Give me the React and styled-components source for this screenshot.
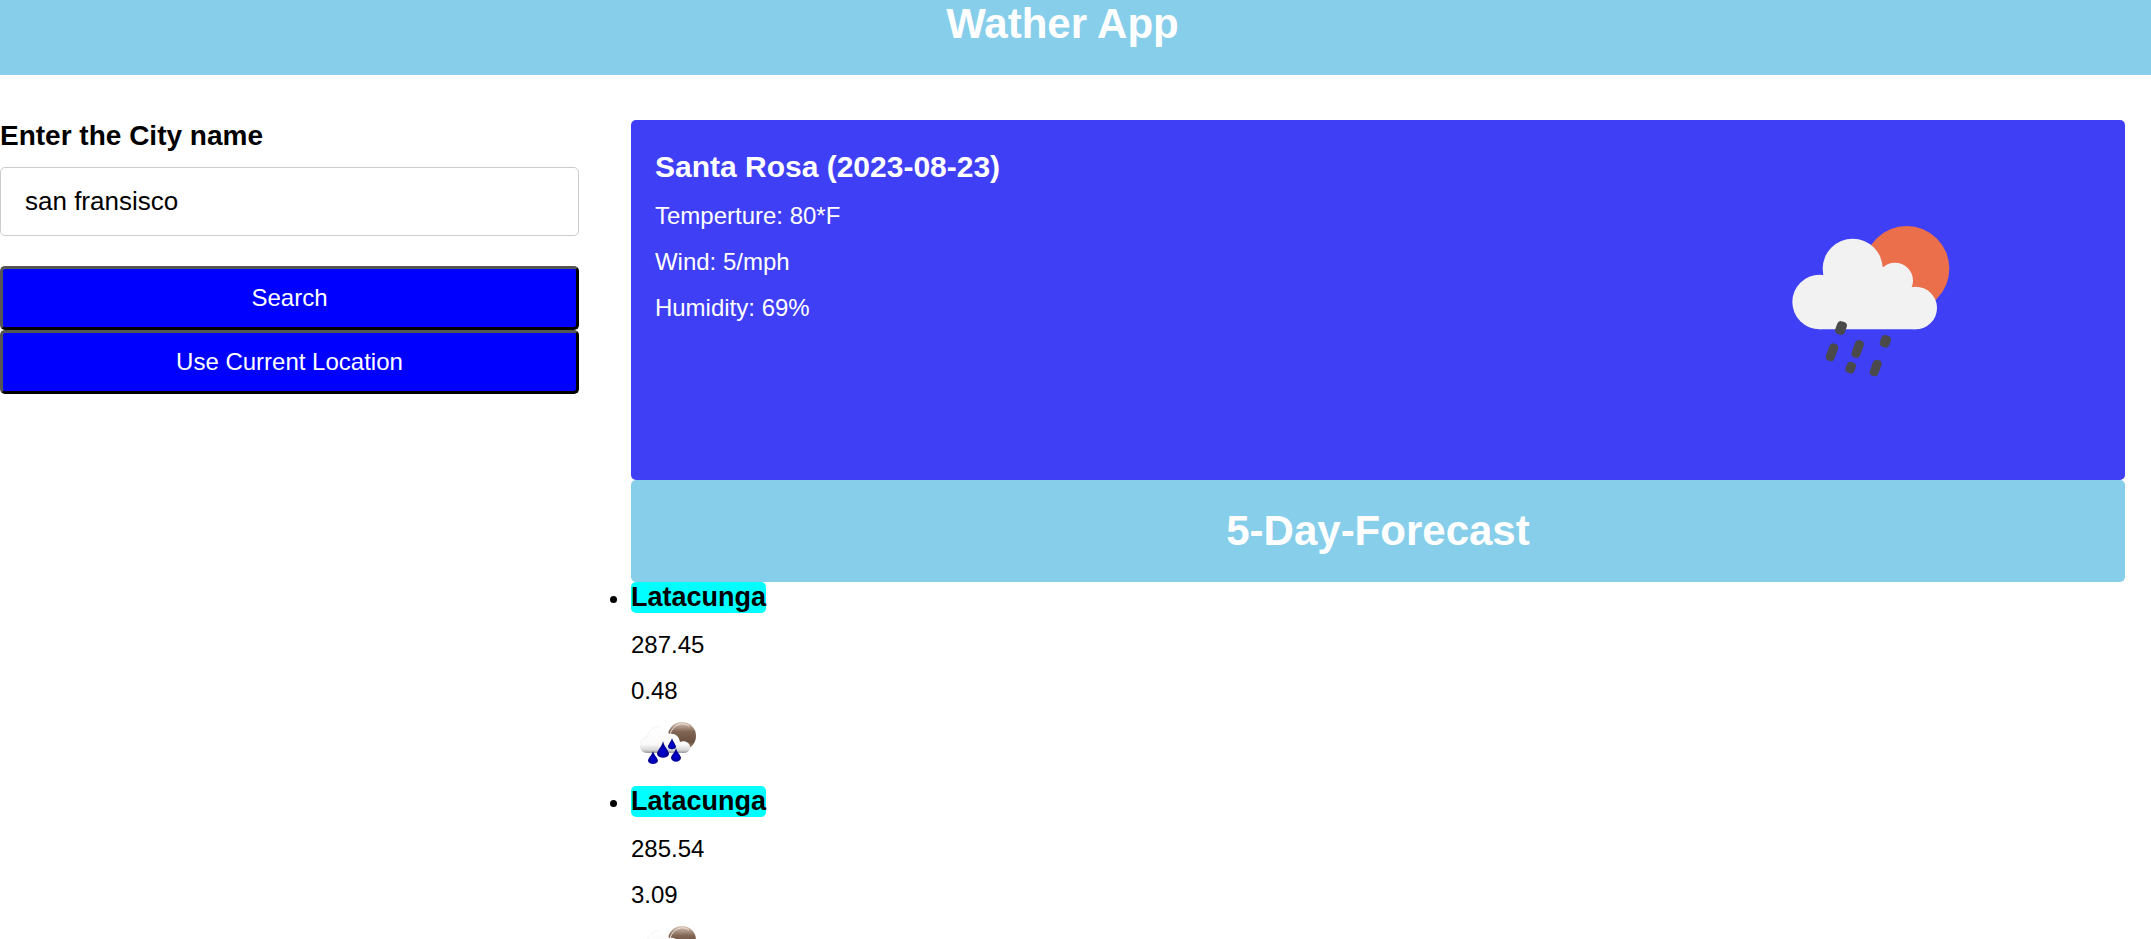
import React, { useState } from "react";
import styled, { createGlobalStyle } from "styled-components";

const GlobalStyle = createGlobalStyle`
  *, *::before, *::after { box-sizing: border-box; }
  body {
    margin: 0;
    background: #fff;
    color: #000;
    font-family: "Liberation Sans", Arial, sans-serif;
    font-size: 24px;
    line-height: 28px;
  }
`;

const Page = styled.div`
  height: 100vh;
  overflow: hidden;
`;

const Header = styled.header`
  padding: 0 26px 27px 0;
  background: skyblue;
  color: #fff;
  text-align: center;
`;

const Title = styled.h1`
  margin: 0;
  font-size: 42px;
  line-height: 48px;
`;

const Layout = styled.main`
  display: grid;
  grid-template-columns: minmax(0, 31fr) minmax(0, 80fr);
  column-gap: 52px;
  align-items: start;
  padding: 45px 26px 0 0;
`;

const SearchForm = styled.form`
  display: flex;
  flex-direction: column;
`;

const CityLabel = styled.label`
  margin-bottom: 15px;
  font-size: 28px;
  font-weight: bold;
  line-height: 32px;
`;

const CityInput = styled.input`
  width: 100%;
  height: 69px;
  margin-bottom: 30px;
  padding: 0 24px;
  border: 1px solid #ccc;
  border-radius: 5px;
  background: #fff;
  color: #000;
  font-family: inherit;
  font-size: 26px;
`;

const Button = styled.button`
  width: 100%;
  height: 64px;
  padding: 0;
  border: 3px solid;
  border-color: #555 #000 #000 #555;
  border-radius: 5px;
  background: #00f;
  color: #fff;
  font-family: inherit;
  font-size: 24px;
  cursor: pointer;
`;

const CurrentWeather = styled.article`
  display: flex;
  justify-content: space-between;
  min-height: 360px;
  padding: 30px 24px;
  border-radius: 5px;
  background: #3f3ff5;
  color: #fff;
`;

const Details = styled.div`
  display: flex;
  flex-direction: column;
  gap: 18px;
`;

const City = styled.h2`
  margin: 0;
  font-size: 30px;
  line-height: 34px;
`;

const Reading = styled.p`
  margin: 0;
`;

const Figure = styled.div`
  display: flex;
  flex: 0 0 32%;
  align-items: center;
  justify-content: center;
`;

const ForecastBanner = styled.div`
  padding: 27px;
  border-radius: 5px;
  background: skyblue;
  color: #fff;
  text-align: center;
`;

const ForecastTitle = styled(Title).attrs({ as: "h2" })``;

const ForecastList = styled.ul`
  margin: 0;
  padding: 0;
`;

const Day = styled.li`
  & > p { margin-top: 18px; }
`;

const DayCity = styled.h3`
  display: inline-block;
  margin: 0;
  border-radius: 5px;
  background: aqua;
  font-size: 27px;
  line-height: 31px;
`;

const DayIcon = styled.svg`
  display: block;
`;

const drops = [
  { x: 243, y: 384, width: 30, height: 40 },
  { x: 216, y: 457, width: 27, height: 54 },
  { x: 293, y: 447, width: 27, height: 54 },
  { x: 376, y: 424, width: 30, height: 36 },
  { x: 272, y: 503, width: 28, height: 34 },
  { x: 347, y: 504, width: 27, height: 50 },
];

function RainIcon() {
  return (
    <svg width="220" height="200" viewBox="0 0 660 600" role="img" aria-label="Rain">
      <circle cx="440" cy="206" r="128" fill="#eb6f4b" />
      <g fill="#f2f2f2">
        <circle cx="278" cy="206" r="90" />
        <circle cx="179" cy="306" r="82" />
        <circle cx="405" cy="242" r="54" />
        <circle cx="467" cy="324" r="64" />
        <path d="M179 225H240L368 200L430 265L467 262V388H179Z" />
      </g>
      <g fill="#4a4a4a">
        {drops.map(({ x, y, width, height }) => (
          <rect
            key={x}
            x={x - width / 2}
            y={y - height / 2}
            width={width}
            height={height}
            rx="12"
            transform={`rotate(20 ${x} ${y})`}
          />
        ))}
      </g>
    </svg>
  );
}

function ShowerIcon({ id }) {
  return (
    <DayIcon width="66" height="81" viewBox="0 0 66 81" role="img" aria-label="Showers">
      <defs>
        <linearGradient id={`${id}-sun`} x1="0" y1="0" x2="0" y2="1">
          <stop offset="0" stopColor="#dcc8ba" />
          <stop offset="0.35" stopColor="#806454" />
          <stop offset="0.7" stopColor="#6b5141" />
          <stop offset="1" stopColor="#a98e7d" />
        </linearGradient>
        <linearGradient id={`${id}-cloud`} gradientUnits="userSpaceOnUse" x1="0" y1="21" x2="0" y2="49">
          <stop offset="0" stopColor="#fff" />
          <stop offset="0.65" stopColor="#fafafa" />
          <stop offset="0.85" stopColor="#d8d8d8" />
          <stop offset="1" stopColor="#858585" />
        </linearGradient>
        <radialGradient id={`${id}-drop`} cx="0.5" cy="0.65" r="0.55">
          <stop offset="0" stopColor="#0000e0" />
          <stop offset="1" stopColor="#000078" />
        </radialGradient>
      </defs>
      <circle cx="51" cy="31" r="14" fill={`url(#${id}-sun)`} />
      <path d="M39 29C42 20 51 16 58 21" fill="none" stroke="#f0e4da" strokeWidth="1" />
      <path
        d="M16 48C11 48 9 44 9 41C9 36 12 33 16 32C17 26 22 22 28 22C33 22 36 25 38 29C44 28 48 31 49 37C54 35 59 38 59 42C59 46 56 48 52 48Z"
        fill={`url(#${id}-cloud)`}
      />
      <path d="M9 39C9 35 12 33 16 32C17 26 22 22 28 22" fill="none" stroke="#f4f4f4" strokeWidth="1" />
      <g fill={`url(#${id}-drop)`}>
        <path d="M32 36C31 42 26 45 26 49C27 54 37 54 38 49C38 45 33 42 32 36Z" />
        <path d="M41 33C40 37 37 39 37 42C38 45 44 45 45 42C45 39 42 37 41 33Z" />
        <path d="M22 46C21 50 17 53 17 56C18 60 26 60 27 56C27 53 23 50 22 46Z" />
        <path d="M45 43C44 48 40 50 40 53C41 58 49 58 50 53C50 50 46 48 45 43Z" />
      </g>
    </DayIcon>
  );
}

const forecast = [
  { id: "day-1", city: "Latacunga", temperature: "287.45", wind: "0.48" },
  { id: "day-2", city: "Latacunga", temperature: "285.54", wind: "3.09" },
];

export default function App() {
  const [city, setCity] = useState("san fransisco");

  return (
    <>
      <GlobalStyle />
      <Page>
        <Header>
          <Title>Wather App</Title>
        </Header>
        <Layout>
          <SearchForm onSubmit={(event) => event.preventDefault()}>
            <CityLabel htmlFor="city">Enter the City name</CityLabel>
            <CityInput
              id="city"
              type="text"
              value={city}
              onChange={(event) => setCity(event.target.value)}
            />
            <Button type="submit">Search</Button>
            <Button type="button">Use Current Location</Button>
          </SearchForm>
          <section>
            <CurrentWeather>
              <Details>
                <City>Santa Rosa (2023-08-23)</City>
                <Reading>Temperture: 80*F</Reading>
                <Reading>Wind: 5/mph</Reading>
                <Reading>Humidity: 69%</Reading>
              </Details>
              <Figure>
                <RainIcon />
              </Figure>
            </CurrentWeather>
            <ForecastBanner>
              <ForecastTitle>5-Day-Forecast</ForecastTitle>
            </ForecastBanner>
            <ForecastList>
              {forecast.map((day) => (
                <Day key={day.id}>
                  <DayCity>{day.city}</DayCity>
                  <Reading>{day.temperature}</Reading>
                  <Reading>{day.wind}</Reading>
                  <ShowerIcon id={day.id} />
                </Day>
              ))}
            </ForecastList>
          </section>
        </Layout>
      </Page>
    </>
  );
}
